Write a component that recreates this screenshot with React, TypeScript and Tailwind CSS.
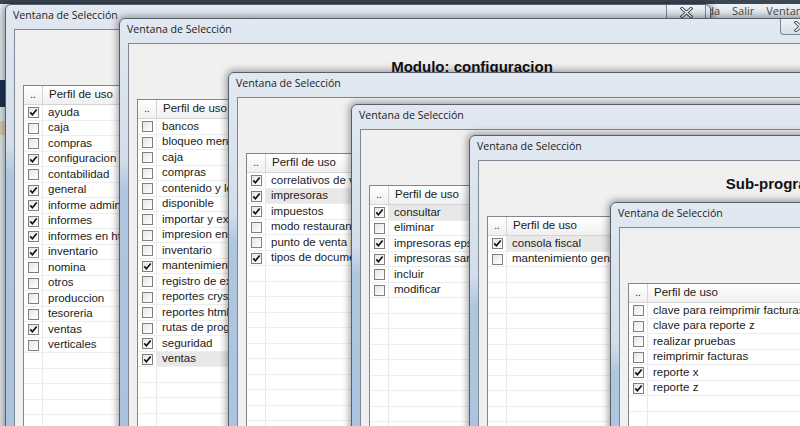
import React from 'react';

type Item = { label: string; checked?: boolean; selected?: boolean };

type SelWindowProps = {
  pos: string;
  heading: string;
  items: Item[];
};

const ROW_COUNT = 22;

const CheckBox = ({ checked }: { checked?: boolean }) => (
  <span className="flex h-[11px] w-[11px] items-center justify-center border border-[#7f8080] bg-gradient-to-br from-[#e6e6e6] to-white">
    {checked && (
      <svg width="9" height="9" viewBox="0 0 9 9">
        <path d="M1.3 4.4 L3.4 6.8 L7.7 1.5" fill="none" stroke="#111" strokeWidth="1.7" />
      </svg>
    )}
  </span>
);

const CloseButton = () => (
  <div className="absolute right-[4px] top-0 flex h-[16px] w-[40px] items-center justify-center rounded-b-[4px] border border-t-0 border-[#7a8591] bg-gradient-to-b from-[#eef2f6] to-[#d5dee8]">
    <svg width="13" height="11" viewBox="0 0 13 11">
      <path d="M2 1.5 L11 9.5 M11 1.5 L2 9.5" stroke="#3a4350" strokeWidth="3.2" strokeLinecap="square" />
      <path d="M2 1.5 L11 9.5 M11 1.5 L2 9.5" stroke="#ffffff" strokeWidth="1.4" strokeLinecap="square" />
    </svg>
  </div>
);

const SelectionTable = ({ items }: { items: Item[] }) => {
  const rows = Array.from({ length: ROW_COUNT }, (_, i) => items[i]);
  return (
    <div className="mt-[22px] border border-[#80868d] bg-white font-['Liberation_Sans',Arial,sans-serif] text-[11.5px] text-[#1b1b1b]">
      <div className="flex h-[19px] border-b border-[#d4d4d4] bg-gradient-to-b from-white to-[#f0f0f0]">
        <div className="flex w-[19px] shrink-0 items-end justify-center border-r border-[#d4d4d4] pb-[3px] text-[10px] leading-[12px]">..</div>
        <div className="flex items-center pl-[6px]">Perfil de uso</div>
      </div>
      {rows.map((item, i) => (
        <div key={i} className={`flex border-b border-[#eeeeee] ${i % 2 === 0 ? 'h-[16px]' : 'h-[15px]'}`}>
          <div className="flex w-[19px] shrink-0 items-center justify-center border-r border-[#e9e9e9]">
            {item && <CheckBox checked={item.checked} />}
          </div>
          <div className={`flex flex-1 items-center whitespace-nowrap pl-[5px] ${item?.selected ? 'bg-[#e8e8e8]' : ''}`}>
            {item?.label}
          </div>
        </div>
      ))}
    </div>
  );
};

const SelWindow = ({ pos, heading, items }: SelWindowProps) => (
  <div
    className={`absolute ${pos} flex h-[440px] w-[706px] flex-col rounded-t-[6px] border border-[#55606b] bg-[linear-gradient(to_bottom,#e1e8f1_0px,#d3deea_140px,#afc6e0_170px,#a9c2de_100%)] shadow-[0_0_7px_2px_rgba(0,0,0,0.35)]`}
  >
    <div className="relative h-[24px] shrink-0 pl-[7px] pt-[2px] font-['Open_Sans',sans-serif] text-[10.6px] leading-[16px] text-[#222]">
      Ventana de Selección
      <CloseButton />
    </div>
    <div className="mx-[8px] flex-1 border border-[#7d8893] bg-[#f0f0f0] px-[8px]">
      <div className="mt-[13px] h-[20px] text-center font-['Liberation_Sans',Arial,sans-serif] text-[15px] font-bold leading-[20px] text-[#111]">
        {heading}
      </div>
      <SelectionTable items={items} />
    </div>
  </div>
);

const windows: SelWindowProps[] = [
  {
    pos: 'left-[5px] top-[4px]',
    heading: 'Perfil: administrador',
    items: [
      { label: 'ayuda', checked: true },
      { label: 'caja' },
      { label: 'compras' },
      { label: 'configuracion', checked: true },
      { label: 'contabilidad' },
      { label: 'general', checked: true },
      { label: 'informe administrativo', checked: true },
      { label: 'informes', checked: true },
      { label: 'informes en html', checked: true },
      { label: 'inventario', checked: true },
      { label: 'nomina' },
      { label: 'otros' },
      { label: 'produccion' },
      { label: 'tesoreria' },
      { label: 'ventas', checked: true },
      { label: 'verticales' },
    ],
  },
  {
    pos: 'left-[119px] top-[18px]',
    heading: 'Modulo: configuracion',
    items: [
      { label: 'bancos' },
      { label: 'bloqueo menu' },
      { label: 'caja' },
      { label: 'compras' },
      { label: 'contenido y logotipo' },
      { label: 'disponible' },
      { label: 'importar y exportar' },
      { label: 'impresion en lote' },
      { label: 'inventario' },
      { label: 'mantenimiento', checked: true },
      { label: 'registro de existencias' },
      { label: 'reportes crystal' },
      { label: 'reportes html' },
      { label: 'rutas de programas' },
      { label: 'seguridad', checked: true },
      { label: 'ventas', checked: true, selected: true },
    ],
  },
  {
    pos: 'left-[228px] top-[72px]',
    heading: 'Sub-modulo: ventas',
    items: [
      { label: 'correlativos de ventas', checked: true },
      { label: 'impresoras', checked: true, selected: true },
      { label: 'impuestos', checked: true },
      { label: 'modo restaurante' },
      { label: 'punto de venta pos' },
      { label: 'tipos de documentos', checked: true },
    ],
  },
  {
    pos: 'left-[351px] top-[104px]',
    heading: 'Programa: impresoras',
    items: [
      { label: 'consultar', checked: true, selected: true },
      { label: 'eliminar' },
      { label: 'impresoras epson', checked: true },
      { label: 'impresoras samsung', checked: true },
      { label: 'incluir' },
      { label: 'modificar' },
    ],
  },
  {
    pos: 'left-[469px] top-[135px]',
    heading: 'Sub-programa: impresoras',
    items: [
      { label: 'consola fiscal', checked: true, selected: true },
      { label: 'mantenimiento general' },
    ],
  },
  {
    pos: 'left-[610px] top-[202px]',
    heading: 'Opciones: consola fiscal',
    items: [
      { label: 'clave para reimprimir facturas' },
      { label: 'clave para reporte z' },
      { label: 'realizar pruebas' },
      { label: 'reimprimir facturas' },
      { label: 'reporte x', checked: true },
      { label: 'reporte z', checked: true },
    ],
  },
];

const App: React.FC = () => {
  return (
    <div className="relative h-[426px] w-[800px] overflow-hidden bg-[#e2e8ee]">
      {/* main application behind the dialogs */}
      <div className="h-[4px] bg-[#3d4855]" />
      <div className="flex h-[14px] items-center gap-[12px] bg-gradient-to-b from-[#eef2f6] to-[#dde5ed] pl-[688px] font-['Open_Sans',sans-serif] text-[11px] leading-[14px] text-[#4a4a4a]">
        <span>Ayuda</span>
        <span>Salir</span>
        <span>Ventana</span>
      </div>
      <div className="absolute left-0 top-[80px] h-[27px] w-[6px] bg-[#1d3352]" />
      <div className="absolute left-0 top-[121px] h-[14px] w-[6px] bg-[#d8cfae]" />

      {windows.map((w, i) => (
        <SelWindow key={i} {...w} />
      ))}
    </div>
  );
};

export default App;
